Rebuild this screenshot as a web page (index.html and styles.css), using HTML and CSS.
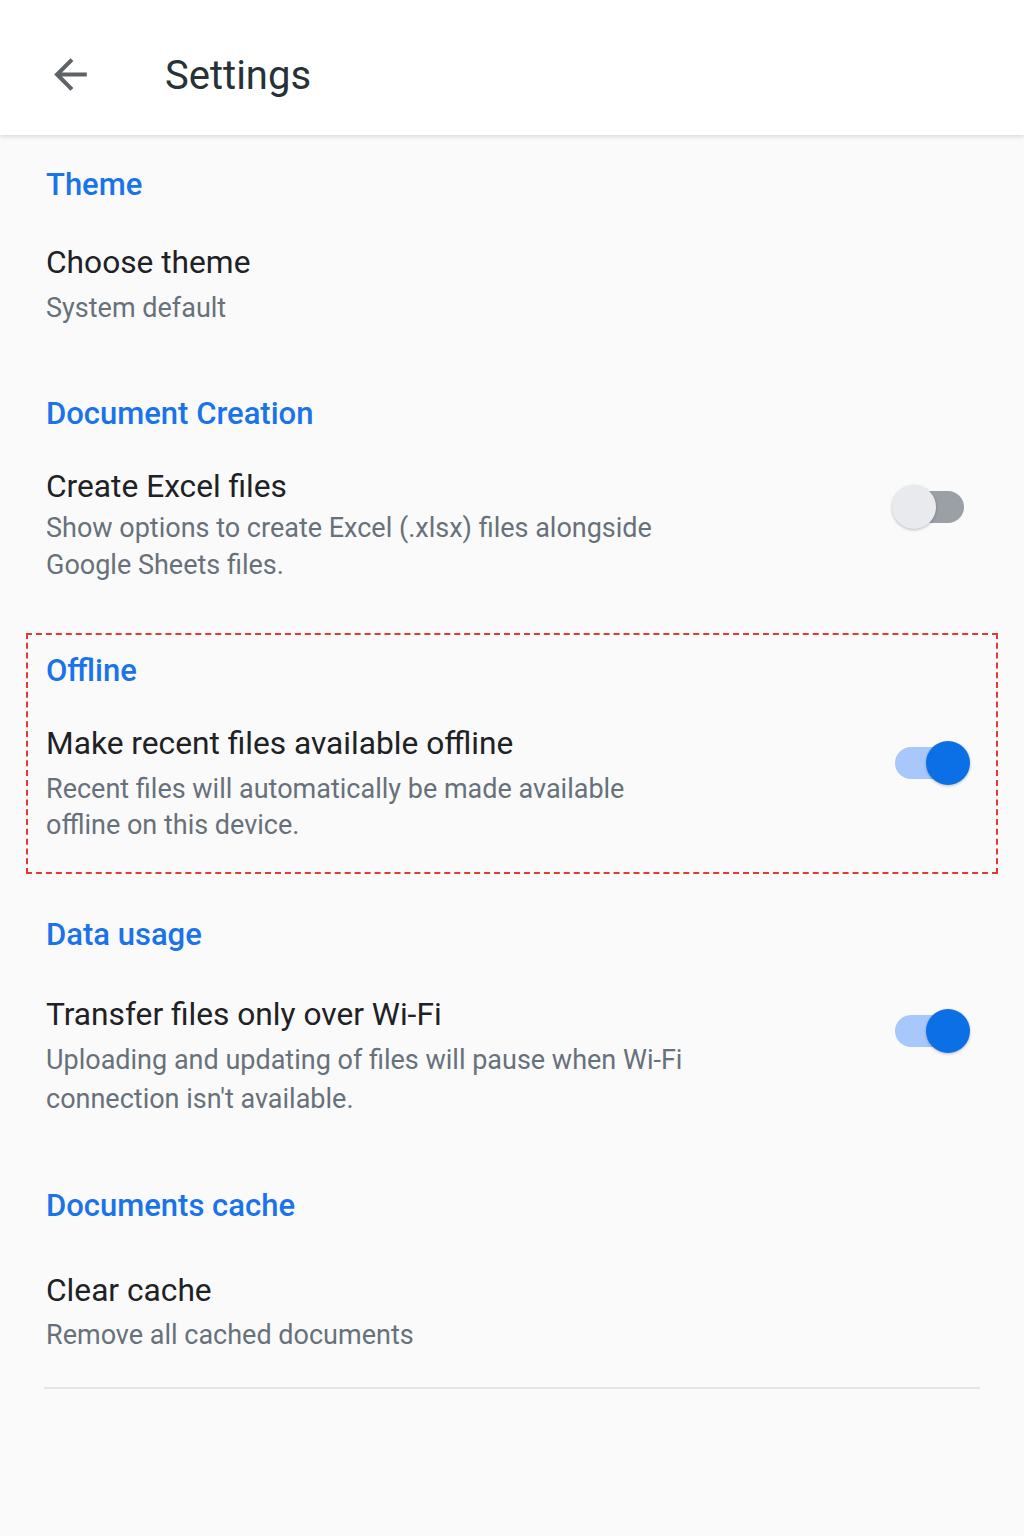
FILE: index.html
```html
<!DOCTYPE html>
<html>
<head>
	<meta charset="utf-8">
	<title>Settings</title>
	<link rel="stylesheet" href="styles.css">
</head>
<body>
	<header class="topbar">
		<svg class="back" viewBox="0 0 24 24" width="49" height="49">
			<path d="M20 11H7.83l5.59-5.59L12 4l-8 8 8 8 1.41-1.41L7.83 13H20v-2z" fill="#5f6368"/>
		</svg>
		<h1>Settings</h1>
	</header>

	<main class="content">
		<section class="group first">
			<h2>Theme</h2>
			<div class="item">
				<div class="text">
					<div class="title">Choose theme</div>
					<div class="sub">System default</div>
				</div>
			</div>
		</section>

		<section class="group creation">
			<h2>Document Creation</h2>
			<div class="item">
				<div class="text">
					<div class="title">Create Excel files</div>
					<div class="sub">Show options to create Excel (.xlsx) files alongside Google Sheets files.</div>
				</div>
				<div class="switch"><span class="track"></span><span class="knob"></span></div>
			</div>
		</section>

		<section class="group marked">
			<h2>Offline</h2>
			<div class="item">
				<div class="text">
					<div class="title">Make recent files available offline</div>
					<div class="sub">Recent files will automatically be made available offline on this device.</div>
				</div>
				<div class="switch on"><span class="track"></span><span class="knob"></span></div>
			</div>
		</section>

		<section class="group data">
			<h2>Data usage</h2>
			<div class="item">
				<div class="text">
					<div class="title">Transfer files only over Wi-Fi</div>
					<div class="sub">Uploading and updating of files will pause when Wi-Fi connection isn't available.</div>
				</div>
				<div class="switch on"><span class="track"></span><span class="knob"></span></div>
			</div>
		</section>

		<section class="group cache">
			<h2>Documents cache</h2>
			<div class="item">
				<div class="text">
					<div class="title">Clear cache</div>
					<div class="sub">Remove all cached documents</div>
				</div>
			</div>
		</section>
		<hr class="divider">
	</main>
</body>
</html>
```

FILE: styles.css
```css
body{
	margin: 0;
	background-color: #fafafa;
	font-family: Roboto, "Noto Sans", Arial, sans-serif;
}
.topbar{
	display: flex;
	align-items: center;
	height: 135px;
	background-color: #fff;
	box-shadow: 0 2px 4px rgba(0,0,0,.12);
	padding: 14px 0 0 46px;
	box-sizing: border-box;
}
.topbar .back{
	display: block;
}
.topbar h1{
	margin: 2px 0 0 70px;
	font-size: 40px;
	font-weight: 400;
	color: #263238;
}
.content{
	padding: 30px 0 0;
}
.group{
	padding: 0 44px 0 46px;
	margin-top: 67px;
}
.group.first{
	margin-top: 0;
}
.group h2{
	margin: 0;
	font-size: 31px;
	line-height: 40px;
	font-weight: 500;
	color: #1a73e8;
}
.item{
	display: flex;
	justify-content: space-between;
	align-items: flex-start;
	margin-top: 38px;
}
.title{
	font-size: 31.7px;
	line-height: 40px;
	color: #202124;
}
.sub{
	font-size: 27px;
	line-height: 37px;
	color: #67717b;
	margin-top: 7px;
	width: 650px;
}
.switch{
	position: relative;
	width: 78px;
	height: 44px;
	margin: 18px 10px 0 0;
}
.switch .track{
	position: absolute;
	left: 8px;
	right: 6px;
	top: 6px;
	height: 32px;
	border-radius: 16px;
	background-color: #9aa0a6;
}
.switch .knob{
	position: absolute;
	left: 0;
	top: 0;
	width: 44px;
	height: 44px;
	border-radius: 50%;
	background-color: #e8eaed;
	box-shadow: 0 1px 3px rgba(0,0,0,.25);
}
.switch.on .track{
	left: 3px;
	right: 10px;
	background-color: #a8c7fa;
}
.switch.on .knob{
	left: auto;
	right: 0;
	background-color: #0b6fe6;
}
.group.creation .item{
	margin-top: 33px;
}
.group.creation .sub{
	margin-top: 3px;
}
.group.marked{
	margin: 49px 26px 0;
	padding: 16px 20px 29px 18px;
	border: 2px dashed #e53935;
}
.group.marked .item{
	margin-top: 33px;
}
.group.marked .sub{
	margin-top: 7px;
	line-height: 36px;
}
.group.marked .switch{
	margin: 17px 6px 0 0;
}
.group.data{
	margin-top: 41px;
}
.group.data .item{
	margin-top: 40px;
}
.group.data .sub{
	margin-top: 6px;
	line-height: 39px;
}
.group.data .switch{
	margin-top: 14px;
}
.group.cache .item{
	margin-top: 45px;
}
.group.cache .sub{
	margin-top: 6px;
}
.divider{
	margin: 33px 44px 0;
	border: none;
	height: 2px;
	background-color: #e3e5e8;
}
```
